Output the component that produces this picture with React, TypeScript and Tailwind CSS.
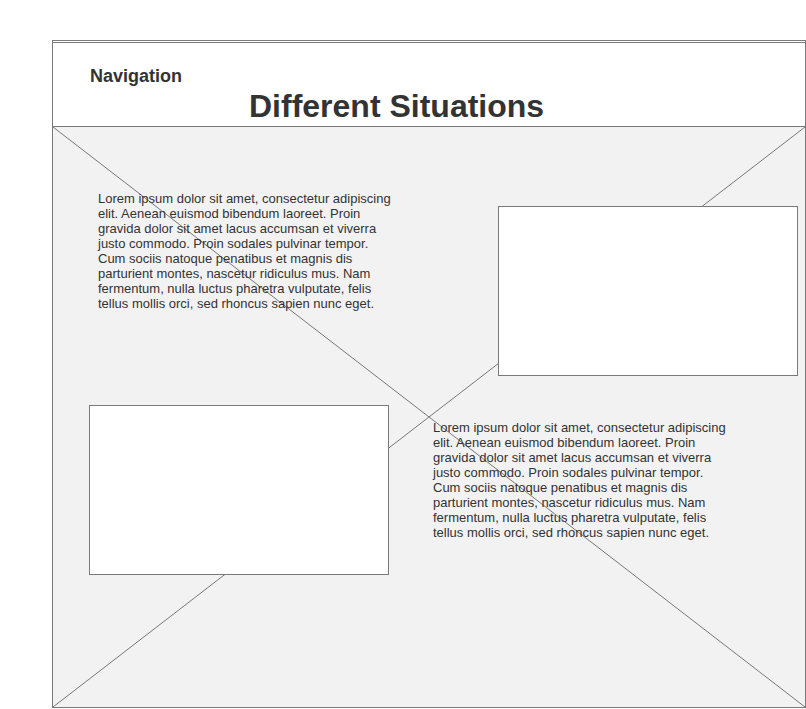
import React from "react";

const lorem =
  "Lorem ipsum dolor sit amet, consectetur adipiscing elit. Aenean euismod bibendum laoreet. Proin gravida dolor sit amet lacus accumsan et viverra justo commodo. Proin sodales pulvinar tempor. Cum sociis natoque penatibus et magnis dis parturient montes, nascetur ridiculus mus. Nam fermentum, nulla luctus pharetra vulputate, felis tellus mollis orci, sed rhoncus sapien nunc eget.";

const TextBlock = ({ className = "" }: { className?: string }) => (
  <p className={`w-[300px] text-[13px] leading-[15px] text-[#333333] ${className}`}>
    {lorem}
  </p>
);

const ImageBox = ({ className = "" }: { className?: string }) => (
  <div className={`w-[300px] h-[170px] shrink-0 bg-white border border-[#7a7a7a] ${className}`} />
);

const App = () => {
  return (
    <div className="min-h-[709px] bg-white pt-[40px] pl-[52px] font-['Liberation_Sans',Arial,sans-serif]">
      <div className="w-[754px] h-[668px] border border-[#7a7a7a] flex flex-col">
        {/* header */}
        <div className="mt-px h-[85px] shrink-0 border-y border-[#7a7a7a] bg-white pl-[37px] pt-[24px]">
          <h3 className="text-[18px] leading-[18px] font-bold text-[#333333]">Navigation</h3>
          <h1 className="mt-[5px] ml-[159px] text-[32px] leading-[32px] font-bold text-[#333333]">
            Different Situations
          </h1>
        </div>

        {/* content */}
        <div className="relative flex-1 bg-[#f2f2f2]">
          <svg className="absolute inset-0 w-full h-full" preserveAspectRatio="none" viewBox="0 0 100 100">
            <line x1="0" y1="0" x2="100" y2="100" stroke="#777777" strokeWidth="1" vectorEffect="non-scaling-stroke" />
            <line x1="100" y1="0" x2="0" y2="100" stroke="#777777" strokeWidth="1" vectorEffect="non-scaling-stroke" />
          </svg>

          <div className="relative flex items-start pl-[45px] pt-[64px]">
            <TextBlock />
            <ImageBox className="ml-[100px] mt-[15px]" />
          </div>

          <div className="relative flex items-start pl-[36px] mt-[29px]">
            <ImageBox />
            <TextBlock className="ml-[44px] mt-[15px]" />
          </div>
        </div>
      </div>
    </div>
  );
};

export default App;
